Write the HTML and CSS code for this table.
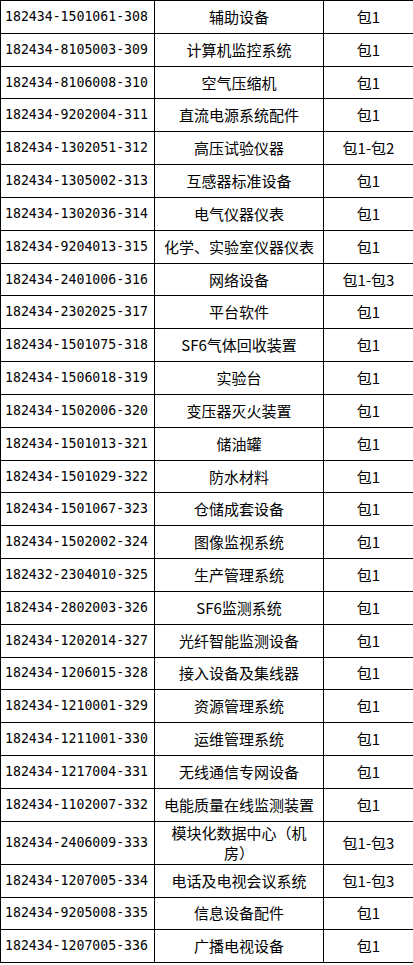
FILE: index.html
```html
<!DOCTYPE html>
<html lang="zh-CN">
<head>
<meta charset="utf-8">
<title>设备清单</title>
<link rel="stylesheet" href="styles.css">
</head>
<body>
<table class="list">
<colgroup><col class="c-code"><col class="c-name"><col class="c-pkg"></colgroup>
<tbody>
<tr><td class="code">182434-1501061-308</td><td class="name">辅助设备</td><td class="pkg">包1</td></tr>
<tr><td class="code">182434-8105003-309</td><td class="name">计算机监控系统</td><td class="pkg">包1</td></tr>
<tr><td class="code">182434-8106008-310</td><td class="name">空气压缩机</td><td class="pkg">包1</td></tr>
<tr><td class="code">182434-9202004-311</td><td class="name">直流电源系统配件</td><td class="pkg">包1</td></tr>
<tr><td class="code">182434-1302051-312</td><td class="name">高压试验仪器</td><td class="pkg">包1-包2</td></tr>
<tr><td class="code">182434-1305002-313</td><td class="name">互感器标准设备</td><td class="pkg">包1</td></tr>
<tr><td class="code">182434-1302036-314</td><td class="name">电气仪器仪表</td><td class="pkg">包1</td></tr>
<tr><td class="code">182434-9204013-315</td><td class="name">化学、实验室仪器仪表</td><td class="pkg">包1</td></tr>
<tr><td class="code">182434-2401006-316</td><td class="name">网络设备</td><td class="pkg">包1-包3</td></tr>
<tr><td class="code">182434-2302025-317</td><td class="name">平台软件</td><td class="pkg">包1</td></tr>
<tr><td class="code">182434-1501075-318</td><td class="name">SF6气体回收装置</td><td class="pkg">包1</td></tr>
<tr><td class="code">182434-1506018-319</td><td class="name">实验台</td><td class="pkg">包1</td></tr>
<tr><td class="code">182434-1502006-320</td><td class="name">变压器灭火装置</td><td class="pkg">包1</td></tr>
<tr><td class="code">182434-1501013-321</td><td class="name">储油罐</td><td class="pkg">包1</td></tr>
<tr><td class="code">182434-1501029-322</td><td class="name">防水材料</td><td class="pkg">包1</td></tr>
<tr><td class="code">182434-1501067-323</td><td class="name">仓储成套设备</td><td class="pkg">包1</td></tr>
<tr><td class="code">182434-1502002-324</td><td class="name">图像监视系统</td><td class="pkg">包1</td></tr>
<tr><td class="code">182432-2304010-325</td><td class="name">生产管理系统</td><td class="pkg">包1</td></tr>
<tr><td class="code">182434-2802003-326</td><td class="name">SF6监测系统</td><td class="pkg">包1</td></tr>
<tr><td class="code">182434-1202014-327</td><td class="name">光纤智能监测设备</td><td class="pkg">包1</td></tr>
<tr><td class="code">182434-1206015-328</td><td class="name">接入设备及集线器</td><td class="pkg">包1</td></tr>
<tr><td class="code">182434-1210001-329</td><td class="name">资源管理系统</td><td class="pkg">包1</td></tr>
<tr><td class="code">182434-1211001-330</td><td class="name">运维管理系统</td><td class="pkg">包1</td></tr>
<tr><td class="code">182434-1217004-331</td><td class="name">无线通信专网设备</td><td class="pkg">包1</td></tr>
<tr><td class="code">182434-1102007-332</td><td class="name">电能质量在线监测装置</td><td class="pkg">包1</td></tr>
<tr class="tall"><td class="code">182434-2406009-333</td><td class="name">模块化数据中心（机房）</td><td class="pkg">包1-包3</td></tr>
<tr><td class="code">182434-1207005-334</td><td class="name">电话及电视会议系统</td><td class="pkg">包1-包3</td></tr>
<tr><td class="code">182434-9205008-335</td><td class="name">信息设备配件</td><td class="pkg">包1</td></tr>
<tr><td class="code">182434-1207005-336</td><td class="name">广播电视设备</td><td class="pkg">包1</td></tr>
</tbody>
</table>
</body>
</html>
```
FILE: styles.css
```css
html, body {
  margin: 0;
  padding: 0;
  background: #fff;
}

.list {
  border-collapse: collapse;
  table-layout: fixed;
  width: 413px;
  font-family: "Noto Sans CJK SC", sans-serif;
  font-size: 15px;
  color: #000;
}

.c-code { width: 154px; }
.c-name { width: 169px; }
.c-pkg { width: 90px; }

.list td {
  border: 1px solid #000;
  height: 32.84px;
  padding: 0 4px;
  line-height: 20px;
  vertical-align: middle;
  box-sizing: border-box;
}

.list td.code {
  text-align: left;
  padding-left: 4px;
  white-space: nowrap;
  font-family: "DejaVu Sans Mono", "Liberation Mono", monospace;
  font-size: 13.2px;
}

.list td.name {
  text-align: center;
  padding: 0 8px;
}

.list td.pkg {
  text-align: center;
}

.list tr.tall td {
  height: 43px;
}
```
